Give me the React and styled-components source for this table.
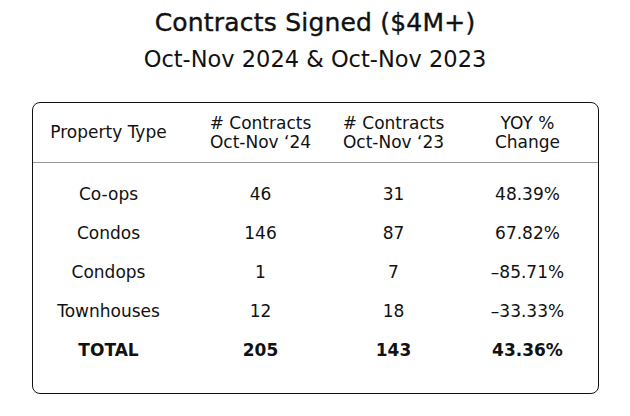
import React from "react";
import styled, { createGlobalStyle } from "styled-components";

const Global = createGlobalStyle`
  html, body { margin: 0; padding: 0; background: #fff; }
  body { font-family: "DejaVu Sans", "Open Sans", sans-serif; color: #111; }
`;

const Page = styled.div`
  width: 630px;
  height: 416px;
  display: flex;
  flex-direction: column;
  align-items: center;
`;

const Title = styled.h1`
  margin: 7px 0 0;
  font-size: 25px;
  line-height: 32px;
  font-weight: 400;
  letter-spacing: 0.2px;
  -webkit-text-stroke: 0.4px #111;
  text-align: center;
`;

const Subtitle = styled.h2`
  margin: 5px 0 0;
  font-size: 22.5px;
  line-height: 30px;
  font-weight: 400;
  text-align: center;
`;

const Card = styled.div`
  margin-top: 28px;
  width: 567px;
  height: 292px;
  box-sizing: border-box;
  border: 1px solid #111;
  border-radius: 8px;
  display: flex;
  flex-direction: column;
`;

const Grid = styled.div`
  display: grid;
  grid-template-columns: 152px 152px 114px 1fr;
`;

const Head = styled(Grid)`
  height: 59px;
  align-items: center;
  border-bottom: 1px solid #999;
`;

const Body = styled.div`
  padding-top: 12px;
  display: flex;
  flex-direction: column;
`;

const Row = styled(Grid)`
  height: 39px;
  align-items: center;
`;

const Cell = styled.div`
  text-align: center;
  font-size: 17px;
  line-height: 19px;
  font-weight: ${(p) => (p.$bold ? 700 : 400)};
  padding-left: ${(p) => (p.$last ? "7px" : "0")};
`;

const rows = [
  ["Co-ops", "46", "31", "48.39%"],
  ["Condos", "146", "87", "67.82%"],
  ["Condops", "1", "7", "–85.71%"],
  ["Townhouses", "12", "18", "–33.33%"],
];

export default function App() {
  return (
    <Page>
      <Global />
      <Title>Contracts Signed ($4M+)</Title>
      <Subtitle>Oct-Nov 2024 &amp; Oct-Nov 2023</Subtitle>
      <Card>
        <Head>
          <Cell>Property Type</Cell>
          <Cell># Contracts<br />Oct-Nov ‘24</Cell>
          <Cell># Contracts<br />Oct-Nov ‘23</Cell>
          <Cell $last>YOY %<br />Change</Cell>
        </Head>
        <Body>
          {rows.map((r) => (
            <Row key={r[0]}>
              <Cell>{r[0]}</Cell>
              <Cell>{r[1]}</Cell>
              <Cell>{r[2]}</Cell>
              <Cell $last>{r[3]}</Cell>
            </Row>
          ))}
          <Row>
            <Cell $bold>TOTAL</Cell>
            <Cell $bold>205</Cell>
            <Cell $bold>143</Cell>
            <Cell $bold $last>43.36%</Cell>
          </Row>
        </Body>
      </Card>
    </Page>
  );
}
